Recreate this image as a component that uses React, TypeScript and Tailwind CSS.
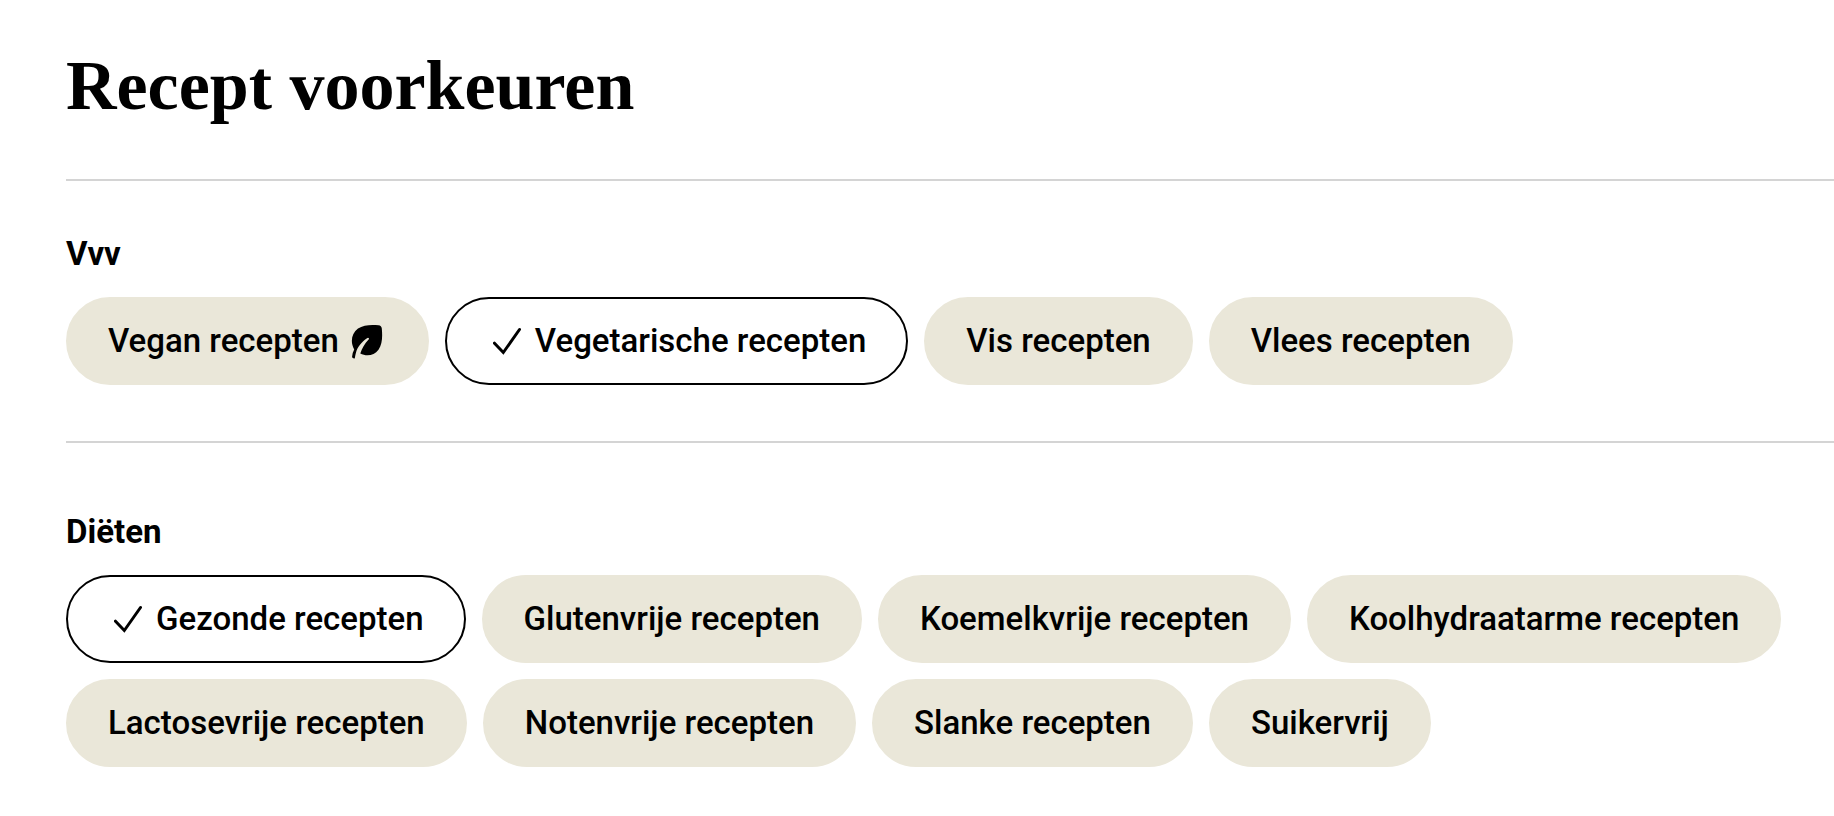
import React from "react";

function Check() {
  return (
    <svg viewBox="0 0 28 28" className="ml-1.5 mr-0.5 size-7 shrink-0" fill="none" stroke="currentColor" strokeWidth="3" aria-hidden="true">
      <path d="M1.500 16.200 10.300 25.500 26.500 2.500" strokeLinecap="round" />
    </svg>
  );
}

function Leaf() {
  return (
    <svg viewBox="9 10 32 35" className="mr-1 h-[35px] w-8 shrink-0" fill="currentColor" aria-hidden="true">
      <path d="M12.800 44.200Q12 44.800 10.800 44Q10 43.500 10.100 42.500Q10.500 38.500 12.200 35.500C8 28 9.500 19.500 16 14.500C21.500 10.700 30 10.500 36.500 11.300Q39.500 11.700 39.800 14.500C40.500 22 40.500 30 36.500 35.800C32 42 24 42.500 18.300 39.500C20 34 22.500 30 26.600 25.500Q27.300 24.600 26.600 24Q25.900 23.500 25 24.200C19 28.500 15.500 33 14 38.500Q13.200 41.500 12.800 44.200Z" />
    </svg>
  );
}

const chip = "flex h-[88px] items-center gap-3 rounded-full border-2 px-10 text-[33px] font-medium";

function Chip({ label, selected = false, leaf = false }: { label: string; selected?: boolean; leaf?: boolean }) {
  return (
    <button
      type="button"
      aria-pressed={selected}
      className={selected ? `${chip} border-black bg-white` : `${chip} border-[#eae7d9] bg-[#eae7d9]`}
    >
      {selected && <Check />}
      {label}
      {leaf && <Leaf />}
    </button>
  );
}

export default function App() {
  return (
    <main className="min-h-screen bg-white pl-[66px] pt-11 font-['Roboto',sans-serif] text-black">
      <h1 className="pb-[51px] font-['Liberation_Serif',serif] text-[70px] font-bold leading-[84px]">Recept voorkeuren</h1>
      <section className="border-t-2 border-[#d4d4d4] py-14">
        <h2 className="mb-[26px] text-[33px] font-bold leading-[34px]">Vvv</h2>
        <div className="flex flex-wrap gap-4">
          <Chip label="Vegan recepten" leaf />
          <Chip label="Vegetarische recepten" selected />
          <Chip label="Vis recepten" />
          <Chip label="Vlees recepten" />
        </div>
      </section>
      <section className="border-t-2 border-[#d4d4d4] pt-[72px]">
        <h2 className="mb-[26px] text-[33px] font-bold leading-[34px]">Diëten</h2>
        <div className="flex flex-wrap gap-4">
          <Chip label="Gezonde recepten" selected />
          <Chip label="Glutenvrije recepten" />
          <Chip label="Koemelkvrije recepten" />
          <Chip label="Koolhydraatarme recepten" />
          <Chip label="Lactosevrije recepten" />
          <Chip label="Notenvrije recepten" />
          <Chip label="Slanke recepten" />
          <Chip label="Suikervrij" />
        </div>
      </section>
    </main>
  );
}
